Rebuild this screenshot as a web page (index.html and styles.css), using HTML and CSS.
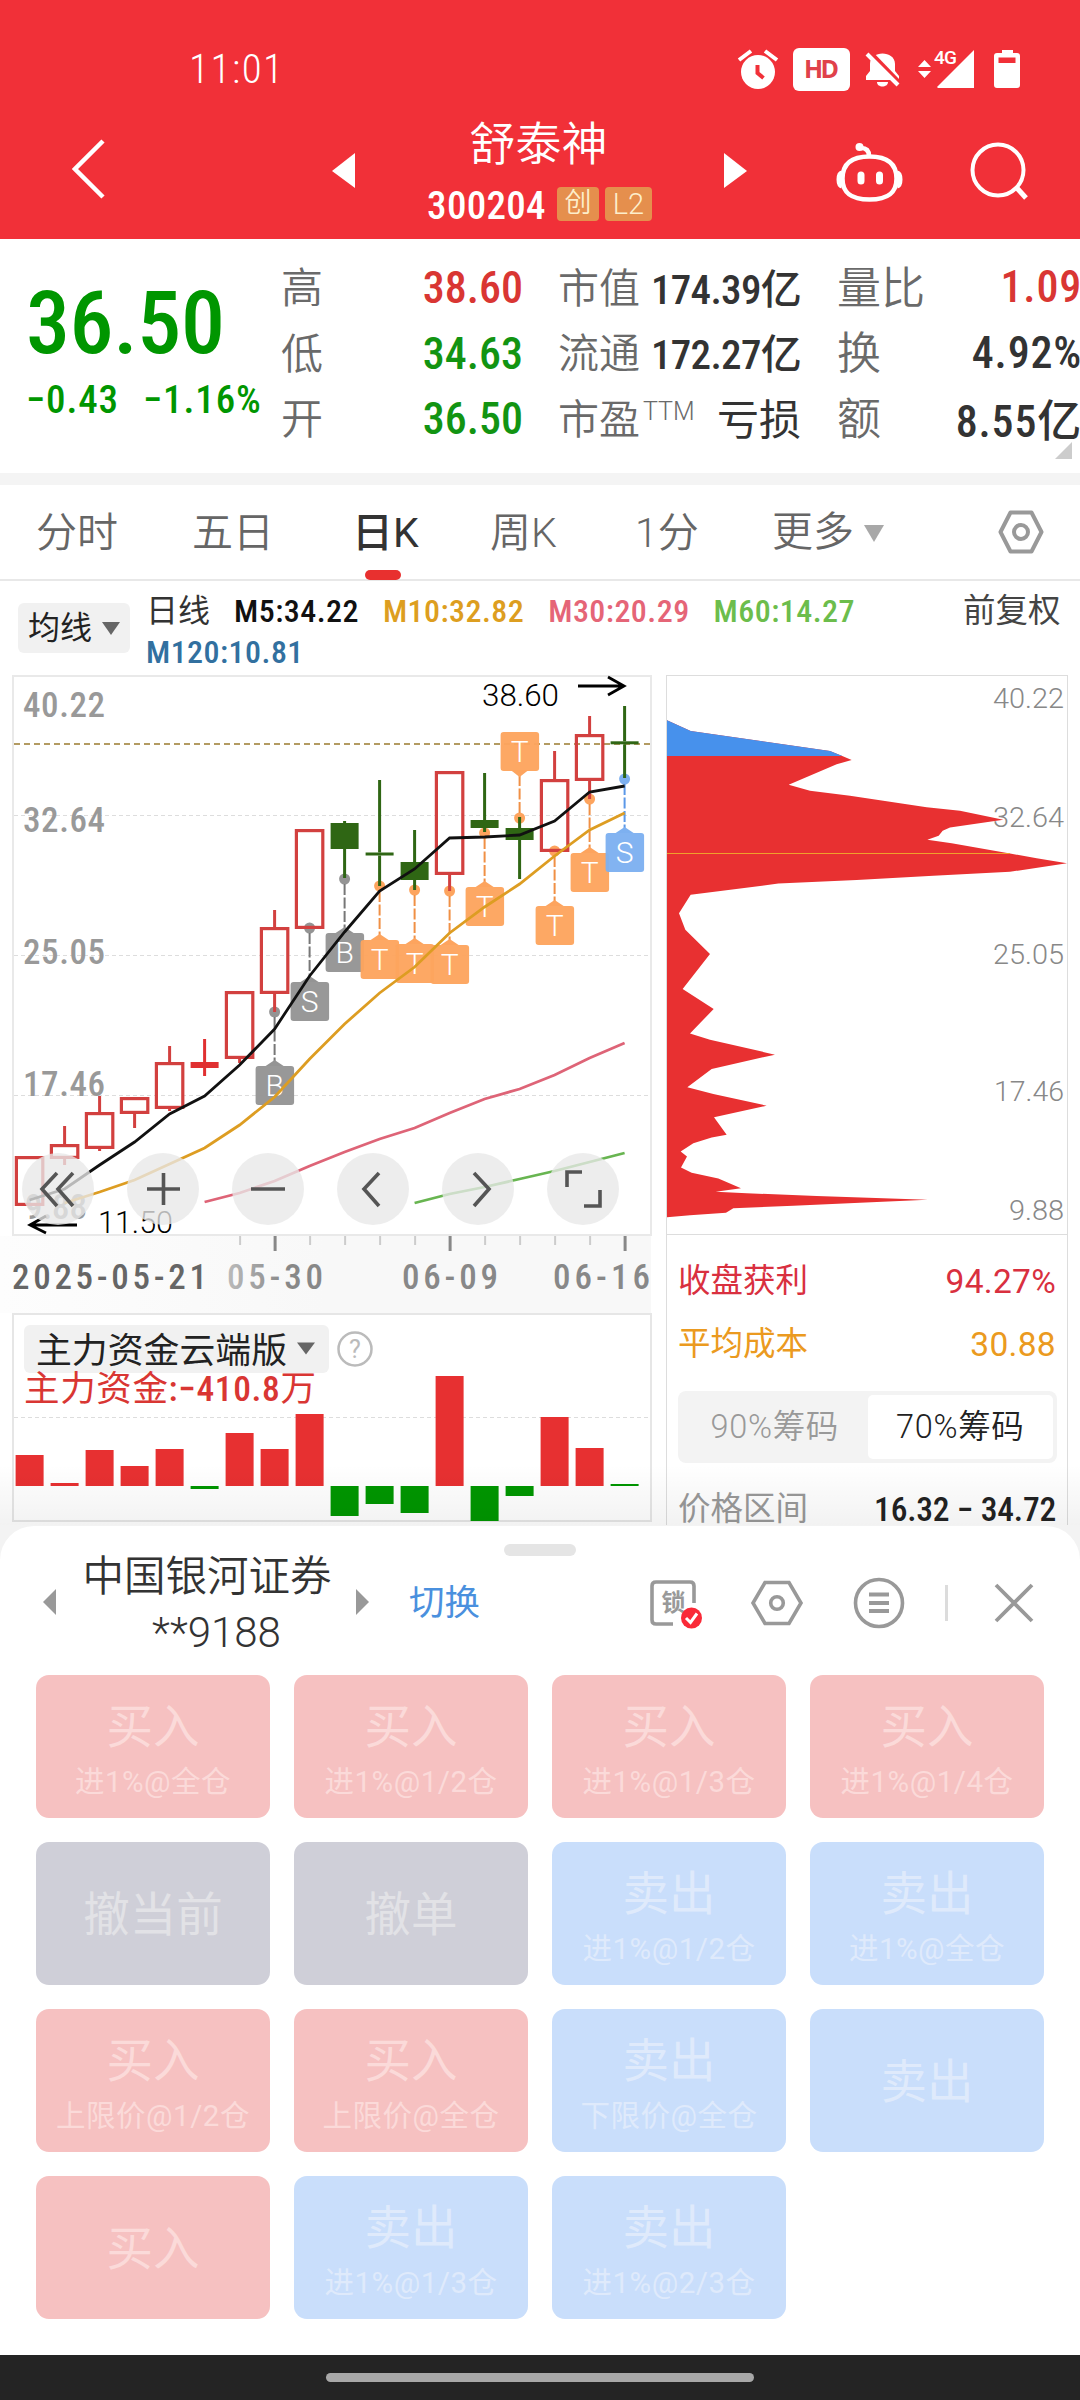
FILE: index.html
```html
<!DOCTYPE html>
<html lang="zh-CN">
<head>
<meta charset="utf-8">
<title>舒泰神 300204</title>
<link rel="stylesheet" href="styles.css">
</head>
<body>
<div class="screen">
  <header class="header">
    <div class="status">
      <span class="clock">11:01</span>
      <svg class="status-icons" width="290" height="62" viewBox="0 -12 290 62" fill="#fff">
        <circle cx="26" cy="24" r="17"/><path d="M7 12L19 3M45 12L33 3" stroke="#fff" stroke-width="4"/><path d="M25.500 17v8l6 5" stroke="#f13038" stroke-width="4" fill="none"/>
        <rect x="61" y="0" width="57" height="43" rx="6"/>
        <text x="89.500" y="30" text-anchor="middle" textLength="35" class="hd">HD</text>
        <path d="M134 32v-4l4-5v-7c0-14 25-14 25 0v7l4 5v4zM145 34h11c0 6-11 6-11 0z"/>
        <path d="M137 3L168 35" stroke="#f13038" stroke-width="4"/><path d="M135 6L166 37" stroke="#fff" stroke-width="4"/>
        <path d="M186 19l6.500-7 6.500 7zM186 23l6.500 7 6.500-7z"/>
        <path d="M205 39L242 2v38h-36z"/>
        <text x="202" y="16" class="net" textLength="23">4G</text>
        <path d="M262 8q0-3 3-3h5V2h11v3h4q3 0 3 3v29q0 3-3 3h-20q-3 0-3-3z"/><rect x="266.500" y="9.500" width="17" height="5.500" fill="#f13038"/>
      </svg>
    </div>
    <div class="nav">
      <svg class="back" width="34" height="60" viewBox="0 0 34 60"><path d="M31 2L3 30L31 58" fill="none" stroke="#fff" stroke-width="4.500"/></svg>
      <svg class="prev" width="24" height="36" viewBox="0 0 24 36"><path d="M24 0v35L1 18z" fill="#fff"/></svg>
      <div class="stock">
        <div class="stock-name">舒泰神</div>
        <div class="stock-code"><b>300204</b><i>创</i><i class="l2">L2</i></div>
      </div>
      <svg class="next" width="24" height="36" viewBox="0 0 24 36"><path d="M0 0v35L23 18z" fill="#fff"/></svg>
      <svg class="robot" width="68" height="64" viewBox="0 0 68 64" fill="none" stroke="#fff" stroke-width="4.500">
        <path d="M33.500 17.500c20 0 27 9 27 22s-7 21-27 21-27-8-27-21 7-22 27-22z"/>
        <path d="M33 17c0-5-2-8-8-8"/><circle cx="23.500" cy="8" r="4" fill="#fff" stroke="none"/>
        <path d="M6 34c-4 1-4 12 0 13M61 34c4 1 4 12 0 13" stroke-width="5"/>
        <path d="M25 36v6M43.500 36v6" stroke-width="7" stroke-linecap="round"/>
      </svg>
      <svg class="search" width="60" height="60" viewBox="0 0 60 60" fill="none" stroke="#fff" stroke-width="4"><circle cx="28" cy="28" r="25.500"/><path d="M46 45l10 11" stroke-width="5"/></svg>
    </div>
  </header>

  <section class="quote">
    <div class="quote-main">
      <div class="price">36.50</div>
      <div class="change"><span>−0.43</span><span>−1.16%</span></div>
    </div>
    <dl class="stats c1">
      <div><dt>高</dt><dd class="up">38.60</dd></div>
      <div><dt>低</dt><dd class="down">34.63</dd></div>
      <div><dt>开</dt><dd class="down">36.50</dd></div>
    </dl>
    <dl class="stats c2">
      <div><dt>市值</dt><dd>174.39亿</dd></div>
      <div><dt>流通</dt><dd>172.27亿</dd></div>
      <div><dt>市盈<sup>TTM</sup></dt><dd class="cn">亏损</dd></div>
    </dl>
    <dl class="stats c3">
      <div><dt>量比</dt><dd class="up">1.09</dd></div>
      <div><dt>换</dt><dd>4.92%</dd></div>
      <div><dt>额</dt><dd>8.55亿</dd></div>
    </dl>
    <span class="corner"></span>
  </section>

  <nav class="tabs">
    <span class="t1">分时</span><span class="t2">五日</span><span class="t3 on">日K</span><span class="t4">周K</span><span class="t5">1分</span><span class="t6">更多<i></i></span>
    <svg width="46" height="46" viewBox="0 0 46 46" fill="none" stroke="#999" stroke-width="4"><path d="M12.500 3.500h21L43.500 23l-10 19.500h-21L2.500 23z" stroke-linejoin="round"/><circle cx="23" cy="23" r="7"/></svg>
  </nav>

  <div class="ma">
    <div class="ma-pick">均线<i></i></div>
    <div class="ma-list">
      <span class="name">日线</span><span>M5:34.22</span><span class="m10">M10:32.82</span><span class="m30">M30:20.29</span><span class="m60">M60:14.27</span><span class="m120">M120:10.81</span>
    </div>
    <div class="adjust">前复权</div>
  </div>

  <main class="charts">
    <div class="left">
      <svg id="kline" width="660" height="638" viewBox="0 675 660 638"></svg>
      <svg id="fund" width="660" height="212" viewBox="0 1313 660 212"></svg>
    </div>
    <aside class="chips">
      <svg id="profile" width="402" height="560" viewBox="666 675 402 560"></svg>
      <div class="row win"><span>收盘获利</span><span class="v">94.27%</span></div>
      <div class="row cost"><span>平均成本</span><span class="v">30.88</span></div>
      <div class="seg"><span>90%筹码</span><span class="on">70%筹码</span></div>
      <div class="row range"><span>价格区间</span><b>16.32 − 34.72</b></div>
    </aside>
    <div class="shade"></div>
  </main>

  <section class="sheet">
    <div class="grip"></div>
    <div class="broker">
      <i class="tri-l"></i>
      <div class="acct"><div>中国银河证券</div><div class="no">**9188</div></div>
      <i class="tri-r"></i>
      <span class="switch">切换</span>
      <svg class="tools" width="440" height="60" viewBox="640 1573 440 60" fill="none" stroke="#999" stroke-width="3.600">
        <path d="M694 1603v-17q0-4-4-4h-34q-4 0-4 4v34q0 4 4 4h17"/>
        <text x="661.500" y="1611" class="lock">锁</text>
        <circle cx="691.500" cy="1618" r="10.500" fill="#fa2a38" stroke="none"/><path d="M686 1618l4.500 4.500 6.500-9" stroke="#fff" stroke-width="3"/>
        <path d="M765 1582.500h24L801 1603l-12 20.500h-24L753 1603z"/><circle cx="777" cy="1603" r="6.300"/>
        <circle cx="879" cy="1603" r="23.500"/><path d="M869 1594.500h20M869 1603h20M869 1611h20" stroke-width="4"/>
        <path d="M946.500 1585v36" stroke="#dcdcdc" stroke-width="3"/>
        <path d="M996 1585l36 36M1032 1585l-36 36" stroke-width="3.800"/>
      </svg>
    </div>
    <div class="grid">
      <button class="buy">买入<small>进1%@全仓</small></button>
      <button class="buy">买入<small>进1%@1/2仓</small></button>
      <button class="buy">买入<small>进1%@1/3仓</small></button>
      <button class="buy">买入<small>进1%@1/4仓</small></button>
      <button class="cancel">撤当前</button>
      <button class="cancel">撤单</button>
      <button class="sell">卖出<small>进1%@1/2仓</small></button>
      <button class="sell">卖出<small>进1%@全仓</small></button>
      <button class="buy">买入<small>上限价@1/2仓</small></button>
      <button class="buy">买入<small>上限价@全仓</small></button>
      <button class="sell">卖出<small>下限价@全仓</small></button>
      <button class="sell">卖出</button>
      <button class="buy">买入</button>
      <button class="sell">卖出<small>进1%@1/3仓</small></button>
      <button class="sell">卖出<small>进1%@2/3仓</small></button>
    </div>
  </section>
  <footer class="home"><i></i></footer>
</div>
<script src="charts.js"></script>
</body>
</html>
```
FILE: styles.css
```css
* { box-sizing: border-box; }
body, dl, dd { margin: 0; }
i { font-style: normal; }
svg { display: block; flex: none; }
body { background: #fff; color: #333; font-family: Roboto, "Noto Sans CJK SC", sans-serif; }
.screen { width: 1080px; height: 2400px; overflow: hidden; display: flex; flex-direction: column; white-space: nowrap; background: #f3f3f3; }

.header { height: 239px; flex: none; background: #f13038; color: #fff; }
.status { height: 110px; padding: 48px 58px 0 189px; display: flex; justify-content: space-between; }
.status-icons { margin-top: -12px; }
.clock { font-size: 41px; line-height: 42px; font-weight: 350; font-stretch: 75%; letter-spacing: 1.5px; }
.hd { font: 700 25px "Open Sans", sans-serif; fill: #e0414a; }
.net { font: 500 19px Roboto, sans-serif; }
.nav { height: 129px; display: flex; }
.back { margin: 29px 0 0 72px; }
.prev { margin: 43px 0 0 225px; }
.stock { width: 367px; text-align: center; }
.next { margin: 43px 0 0 2px; }
.robot { margin: 29px 0 0 88px; }
.search { margin: 32px 0 0 66px; }
.stock-name { font-size: 46px; line-height: 50px; margin-top: 9px; font-weight: 350; }
.stock-code { display: flex; justify-content: center; gap: 6px; margin-top: 18px; height: 34px; align-items: center; padding-left: 2px; }
.stock-code b { font-size: 39px; font-weight: 550; font-stretch: 75%; letter-spacing: .3px; line-height: 38px; padding-top: 3px; margin-right: 5px; }
.stock-code i { width: 42px; height: 34px; border-radius: 4px; background: #e58f4d; color: #fdeecb; font-size: 27px; line-height: 32px; font-weight: 350; }
.stock-code .l2 { width: 47px; font-size: 29px; line-height: 35px; }

.quote { position: relative; height: 234px; flex: none; display: flex; background: #fff; }
.quote-main { width: 281px; padding-left: 26px; color: #009600; }
.price { font-size: 88px; line-height: 100px; margin-top: 34px; font-weight: 500; font-stretch: 75%; letter-spacing: -.4px; }
.change { display: flex; gap: 24px; font-size: 39px; line-height: 46px; margin-top: 4px; font-weight: 500; font-stretch: 75%; letter-spacing: .9px; }
.stats { padding-top: 15px; }
.stats div { height: 65.5px; display: flex; justify-content: space-between; align-items: center; }
.stats dt { font-size: 42px; color: #6a6a6a; font-weight: 350; margin-top: -4px; }
.stats dd { font-size: 44px; font-weight: 500; font-stretch: 75%; padding-top: 3px; }
.stats .up { color: #d93633; }
.stats .down { color: #129412; }
.stats .cn { font-size: 42px; font-weight: 400; padding-top: 0; margin-top: -3px; letter-spacing: 0; }
.c1 { width: 242px; }
.c2 { width: 243px; margin-left: 35px; }
.c2 dt { font-size: 41px; }
.c2 dd { font-size: 41px; letter-spacing: -.7px; padding-top: 0; margin-top: -2px; }
.stats sup { font-size: 25px; font-weight: 300; margin-left: 3px; vertical-align: 14px; line-height: 0; }
.c3 { width: 243px; margin-left: 36px; }
.c3 dt { font-size: 44px; }
.c3 dd { margin-right: -2px; font-size: 44px; letter-spacing: .8px; margin-top: -2px; }
.corner { position: absolute; right: 8px; bottom: 14px; border-left: 17px solid transparent; border-bottom: 17px solid #ccc; }

.tabs { height: 108px; flex: none; border-top: 12px solid #f4f4f4; border-bottom: 2px solid #e8e8e8; display: flex; font-size: 41px; line-height: 96px; color: #666; font-weight: 350; background: #fff; }
.t1 { margin-left: 36px; width: 156px; }
.t2 { width: 160px; }
.t3 { width: 138px; position: relative; }
.t4 { width: 145px; }
.t5 { width: 137px; }
.t6 { width: 226px; display: flex; align-items: center; gap: 10px; }
.t6 i { border: 10.5px solid transparent; border-top: 17px solid #a8a8a8; border-bottom: 0; margin-top: 2px; }
.tabs .on { color: #333; font-weight: 450; }
.tabs .on::after { content: ""; position: absolute; left: 13px; bottom: -1px; width: 36px; height: 10px; border-radius: 5px; background: #e8302f; }
.tabs svg { margin-top: 24px; }

.ma { height: 94px; flex: none; display: flex; padding-left: 18px; background: #fff; }
.ma-pick { width: 112px; height: 50px; margin-top: 22px; border-radius: 6px; background: #f1f1f1; font-size: 32px; line-height: 50px; padding-left: 10px; display: flex; align-items: center; gap: 10px; color: #222; }
.ma-pick i { border: 9px solid transparent; border-top: 13px solid #666; border-bottom: 0; }
.ma-list { width: 800px; padding: 10px 0 0 16px; display: flex; flex-wrap: wrap; gap: 0 24px; font-size: 32px; line-height: 41px; font-weight: 500; font-stretch: 75%; letter-spacing: .45px; color: #111; align-content: flex-start; }
.ma-list .name { font-weight: 400; color: #333; letter-spacing: 0; }
.ma-list .m10 { color: #dd9e20; }
.ma-list .m30 { color: #e56577; }
.ma-list .m60 { color: #6cbd4c; margin-right: 60px; }
.ma-list .m120 { color: #32709f; }
.adjust { margin: 10px 0 0 33px; font-size: 32.500px; line-height: 41px; color: #444; }

.charts { position: relative; height: 850px; flex: none; display: flex; background: #fff; }
.left { width: 660px; }
.chips { width: 402px; margin-left: 6px; border-left: 1px solid #ddd; border-right: 1px solid #ddd; }
#profile { margin-left: -1px; }
.row { display: flex; justify-content: space-between; padding: 0 11px; font-size: 32.500px; height: 63px; line-height: 63px; }
.row .v { font-weight: 400; font-size: 33.500px; letter-spacing: .3px; }
.win { color: #d9303f; margin-top: 15px; }
.cost { color: #eb9a20; }
.seg { margin: 15px 10px 15px 11px; height: 72px; padding: 4px; border-radius: 8px; background: #f3f3f3; display: flex; font-size: 32.500px; font-weight: 350; color: #999; text-align: center; line-height: 64px; letter-spacing: .7px; }
.seg span { flex: 1; }
.seg .on { background: #fff; border-radius: 5px; color: #222; }
.range { color: #999; }
.range b { color: #222; font-weight: 550; font-stretch: 75%; font-size: 33.500px; letter-spacing: -.2px; }
.shade { position: absolute; left: 0; right: 0; bottom: 0; height: 60px; background: linear-gradient(rgba(0,0,0,0), rgba(0,0,0,.05)); }

.sheet { height: 829px; flex: none; background: #fff; border-radius: 34px 34px 0 0; margin-top: 1px; padding-top: 18px; }
.grip { width: 72px; height: 12px; border-radius: 6px; background: #e5e5e5; margin: 0 auto; }
.broker { height: 119px; display: flex; padding-left: 43px; }
.tri-l, .tri-r { border: 13px solid transparent; height: 26px; margin-top: 33px; }
.tri-l { border-right-color: #999; border-left: 0; }
.tri-r { border-left-color: #999; border-right: 0; margin-left: 24px; width: 14px; }
.acct { width: 250px; margin-left: 26px; font-size: 41.500px; line-height: 56px; text-align: center; margin-top: -7px; font-weight: 350; }
.no { font-weight: 300; font-size: 42px; padding-left: 19px; }
.switch { margin-left: 39px; font-size: 35.500px; line-height: 95px; color: #4a90de; }
.tools { margin: 17px 0 0 160px; }
.lock { font: 700 24px "Noto Sans CJK SC", sans-serif; fill: #999; stroke: none; }
.grid { display: grid; grid-template-columns: repeat(4, 234px); grid-auto-rows: 143px; gap: 24px; padding-left: 36px; }
.grid button { border: 0; border-radius: 13px; padding: 2px 0 0; font: 400 46.500px/56px Roboto, "Noto Sans CJK SC", sans-serif; display: flex; flex-direction: column; align-items: center; justify-content: center; }
.grid small { font-size: 29.500px; line-height: 36px; margin: 9px 0 -3px; letter-spacing: .5px; }
.buy { background: #f6c1c1; color: #fbdad9; }
.sell { background: #c9defb; color: #dfeafb; }
.cancel { background: #cfcfd8; color: #e2e2e6; }

.home { height: 45px; flex: none; background: #242424; }
.home i { display: block; width: 428px; height: 9px; border-radius: 5px; background: #a8a8a8; margin: 18px auto 0; }

/* chart text */
.axis { font: 500 35px Roboto, sans-serif; font-stretch: 75%; fill: #999; }
.thin { font: 300 31px Roboto, sans-serif; fill: #000; }
.tag { font: 300 30px Roboto, sans-serif; fill: #fff; text-anchor: middle; }
.plabel { font: 300 28px Roboto, sans-serif; fill: #888; text-anchor: end; }
.fname { font: 400 35.500px "Noto Sans CJK SC", sans-serif; fill: #222; }
.fval { font: 400 35.500px Roboto, "Noto Sans CJK SC", sans-serif; fill: #d93633; }
.fval tspan { font-weight: 500; font-stretch: 75%; }
```
FILE: charts.js
```js
const X = i => 29.6 + 35 * i;
const RED = '#d2403f', GREEN = '#2f6614';
const line = (x1, y1, x2, y2, s, w, extra = '') => `<line x1="${x1}" y1="${y1}" x2="${x2}" y2="${y2}" stroke="${s}" stroke-width="${w}" ${extra}/>`;
const rect = (x, y, w, h, f, extra = '') => `<rect x="${x}" y="${y}" width="${w}" height="${h}" fill="${f}" ${extra}/>`;
const label = (x, y, cls, s, w, extra = '') => `<text x="${x}" y="${y}" class="${cls}" textLength="${w}" lengthAdjust="spacingAndGlyphs" ${extra}>${s}</text>`;
const spaced = (...a) => label(...a).replace('spacingAndGlyphs', 'spacing');

// [type, body top, body bottom, high, low]
const candles = [
  ['r', 1156, 1206, 1156, 1206], ['r', 1144, 1159, 1126, 1165], ['r', 1112, 1149, 1096, 1151],
  ['r', 1097, 1114, 1097, 1128], ['r', 1062, 1109, 1046, 1111], ['f', 1062, 1068, 1039, 1076],
  ['r', 991, 1059, 991, 1063], ['r', 927, 994, 910, 1012], ['r', 829, 929, 829, 929],
  ['g', 823, 849, 821, 878], ['g', 852.5, 855.5, 780, 886], ['g', 862, 880, 830, 890],
  ['r', 771, 875, 771, 891], ['g', 820, 828, 773, 832], ['g', 828, 840, 817, 879],
  ['r', 779, 852, 751, 852], ['r', 734, 781, 716, 799], ['g', 741.3, 744.3, 706, 778]
];
const averages = [
  ['#111', 0, [1200, 1189, 1165, 1142, 1114, 1096, 1065, 1029, 976, 932, 891, 869, 838, 837, 835, 821, 792, 786]],
  ['#dd9d22', 1, [1203, 1192, 1180, 1164, 1148, 1125, 1097, 1059, 1024, 993, 967, 933, 907, 884, 856, 830, 813]],
  ['#de6477', 5, [1202, 1193, 1181, 1166, 1152, 1139, 1128, 1113, 1099, 1089, 1075, 1058, 1043]],
  ['#68b551', 11, [1203, 1194, 1187, 1179, 1171, 1162, 1153]]
];
// [index, letter, dot y, box top]
const tags = [
  [7, 'B', 1012, 1066], [8, 'S', 928, 982], [9, 'B', 879, 933], [10, 'T', 886, 940], [11, 'T', 890, 944],
  [12, 'T', 891, 945], [13, 'T', 833, 887], [14, 'T', 818, 732], [15, 'T', 851, 906], [16, 'T', 799, 853], [17, 'S', 779, 833]
];

let k = '<defs><linearGradient id="bg" x2="1"><stop offset="0" stop-color="#fdfdfd"/><stop offset=".5" stop-color="#f8f8f8"/><stop offset="1" stop-color="#f8f8f8"/></linearGradient><linearGradient id="fade"><stop offset="0" stop-color="#bbb"/><stop offset=".6" stop-color="#888"/></linearGradient></defs>';
k += rect(0, 1236, 651, 77, 'url(#bg)');
k += rect(13, 676, 638, 559, '#fff', 'stroke="#e9e9e9" stroke-width="2"');
[815.5, 955.5, 1095.5].forEach(y => k += line(14, y, 650, y, '#ddd', 1.2, 'stroke-dasharray="4 3"'));
[['40.22', 717], ['32.64', 832], ['25.05', 964], ['17.46', 1096]].forEach(([s, y]) => k += spaced(23, y, 'axis', s, 82));
k += spaced(25, 1219, 'axis', '9.88', 62);
k += line(14, 744, 650, 744, '#b39b62', 1.8, 'stroke-dasharray="6 4"');
const tagColor = (i, c) => c === 'T' ? '#fda45e' : i === 17 ? '#7db0f0' : '#949494';
tags.forEach(([i, c, y]) => k += `<circle cx="${X(i)}" cy="${y}" r="5.500" fill="${tagColor(i, c)}"/>`);
candles.forEach(([t, a, b, h, l], i) => {
  const x = X(i), c = t === 'g' ? GREEN : t === 'f' ? '#e03031' : RED;
  if (h < a) k += line(x, h, x, a, c, 3);
  if (l > b) k += line(x, b, x, l, c, 3);
  k += t === 'r' ? rect(x - 13.2, a + 1.6, 26.4, b - a - 3.2, 'none', `stroke="${c}" stroke-width="3.200"`) : rect(x - 14, a, 28, b - a, c);
});
tags.forEach(([i, c, y, top]) => {
  const x = X(i), f = tagColor(i, c), up = top < y;
  const dark = c === 'T' ? '#f09045' : i === 17 ? '#5b98e8' : '#777';
  k += up ? line(x, top + 43, x, y - 4, dark, 2, 'stroke-dasharray="11 2.500"') : line(x, y + 5, x, top - 4, dark, 2, 'stroke-dasharray="11 2.500"');
  k += `<path d="${up ? `M${x - 9} ${top + 38}l9 7l9-7` : `M${x - 9} ${top}l9-6l9 6`}z" fill="${f}"/>` + rect(x - 19, top, 38.5, 39, f, 'rx="3" fill-opacity=".96"');
  k += `<text x="${x}" y="${top + 30}" class="tag">${c}</text>`;
});
averages.forEach(([c, s, ys]) => k += `<polyline fill="none" stroke="${c}" stroke-width="2.800" points="${ys.map((y, i) => X(i + s) + ',' + y).join(' ')}"/>`);
k += label(482, 706, 'thin', '38.60', 77) + '<path d="M578 686h46M608 677l16 9l-16 9" fill="none" stroke="#000" stroke-width="2.800"/>';
k += label(98, 1233, 'thin', '11.50', 75) + '<path d="M77 1225h-46M46 1216l-16 9l16 8" fill="none" stroke="#000" stroke-width="2.800"/>';
const icons = ['M57 1173l-15 16l15 17M73 1173l-15 16l15 17', 'M147 1189h33M163.500 1173v32', 'M251 1189h34', 'M379 1173l-15 16l15 17', 'M474 1173l15 16l-15 17', 'M567 1187v-15h15M584 1206h16v-16'];
icons.forEach((d, i) => k += `<circle cx="${58 + 105 * i}" cy="1189" r="36" fill="#e8e8e8" fill-opacity=".78"/><path d="${d}" fill="none" stroke="#555" stroke-width="3.600"/>`);
for (let i = 6; i < 18; i++) k += (i - 7) % 5 ? line(X(i) + .5, 1236, X(i) + .5, 1245, '#ccc', 2) : line(X(i) + .5, 1236, X(i) + .5, 1251, '#888', 3);
k += spaced(12, 1289, 'axis', '2025-05-21', 195, 'style="fill:#666"') + spaced(227, 1289, 'axis', '05-30', 96, 'style="fill:url(#fade)"');
k += spaced(402, 1289, 'axis', '06-09', 96, 'style="fill:#888"') + spaced(553, 1289, 'axis', '06-16', 97, 'style="fill:#888"');
document.getElementById('kline').innerHTML = k;

// [top, bottom, green]
const bars = [[1455, 1486], [1483, 1486], [1450, 1486], [1466, 1486], [1449, 1486], [1486, 1489, 1], [1433, 1486], [1449, 1486], [1414, 1486], [1486, 1516, 1], [1486, 1504, 1], [1486, 1513, 1], [1376, 1486], [1486, 1521, 1], [1486, 1496, 1], [1417, 1486], [1448, 1486], [1484, 1486, 1]];
let f = rect(13, 1314, 638, 207, '#fff', 'stroke="#e6e6e6" stroke-width="2"') + line(14, 1417.5, 650, 1417.5, '#ddd', 1.2, 'stroke-dasharray="4 3"');
f += rect(24, 1325, 305, 48, '#f1f1f1', 'rx="6"') + label(36, 1363, 'fname', '主力资金云端版', 251) + '<path d="M297 1342.500h18l-9 12z" fill="#666"/>';
f += '<circle cx="355" cy="1349" r="16.500" fill="none" stroke="#bbb" stroke-width="2.500"/><text x="355" y="1358" text-anchor="middle" style="font:400 25px Roboto,sans-serif;fill:#bbb">?</text>';
bars.forEach(([a, b, g], i) => f += rect(X(i) - 14, a, 28, b - a, g ? '#009600' : '#e73031'));
f += spaced(24, 1401, 'fval', '主力资金<tspan>:−410.8</tspan>万', 292);
document.getElementById('fund').innerHTML = f;

// outline of the distribution: x in 1/3 px, y in 1/2.8 px
const outline = [[51, 141], [122, 171], [540, 227], [575, 240], [605, 252], [560, 264], [416, 321], [480, 338], [600, 352], [830, 384], [930, 394], [1060, 419], [900, 441], [878, 450], [866, 464], [832, 475], [905, 485], [1080, 514], [1160, 527], [1251, 541], [1080, 565], [850, 576], [620, 588], [385, 598], [122, 629], [87, 681], [106, 727], [180, 795], [98, 893], [191, 949], [120, 1018], [180, 1035], [375, 1077], [185, 1117], [112, 1168], [190, 1187], [350, 1220], [192, 1252], [230, 1301], [185, 1309], [130, 1325], [92, 1348], [111, 1362], [93, 1393], [125, 1408], [205, 1424], [273, 1451], [197, 1461], [290, 1465], [500, 1473], [833, 1483], [630, 1492], [430, 1500], [250, 1507], [228, 1520], [120, 1527], [51, 1532]];
const pts = outline.map(p => p.join()).join(' ');
let p = rect(666.5, 675.5, 401, 559, '#fff', 'stroke="#ddd"');
[['40.22', 708, 71], ['32.64', 827, 71], ['25.05', 964, 71], ['17.46', 1101, 70], ['9.88', 1220, 55]].forEach(([s, y, w]) => p += label(1064, y, 'plabel', s, w));
p += `<defs><clipPath id="top"><rect x="51" y="0" width="1200" height="241"/></clipPath></defs><g transform="translate(650 670) scale(.33333 .35714)"><polygon points="${pts}" fill="#e83031"/><polygon points="${pts}" fill="#4791ec" clip-path="url(#top)"/><path d="M51 514h1029" stroke="#efa02c" stroke-width="3"/></g>`;
document.getElementById('profile').innerHTML = p;
```
